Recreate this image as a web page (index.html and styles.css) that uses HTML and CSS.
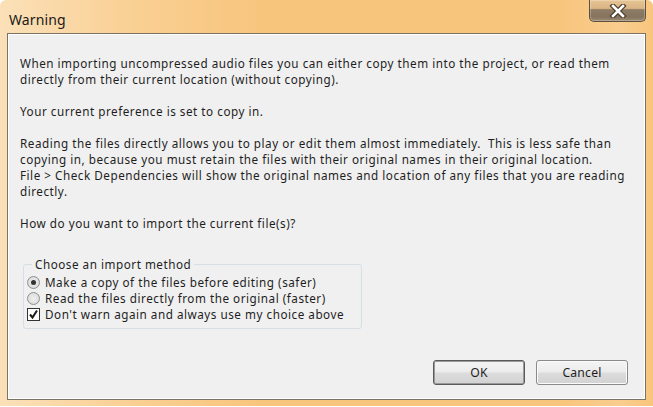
FILE: index.html
```html
<!DOCTYPE html>
<html>
<head>
<meta charset="utf-8">
<link rel="stylesheet" href="styles.css">
</head>
<body>
<div class="window">
  <div class="titlebar">
    <span class="title">Warning</span>
    <div class="close">
      <svg width="20" height="14" viewBox="0 0 20 14">
        <path d="M5 2 L15 12 M15 2 L5 12" stroke="#4a3c2c" stroke-width="5" stroke-linecap="square"/>
        <path d="M5 2 L15 12 M15 2 L5 12" stroke="#ffffff" stroke-width="2.6" stroke-linecap="square"/>
      </svg>
    </div>
  </div>
  <div class="panel">
    <div class="body">
      <p>When importing uncompressed audio files you can either copy them into the project, or read them<br>directly from their current location (without copying).</p>
      <p>Your current preference is set to copy in.</p>
      <p>Reading the files directly allows you to play or edit them almost immediately.&nbsp; This is less safe than<br>copying in, because you must retain the files with their original names in their original location.<br>File &gt; Check Dependencies will show the original names and location of any files that you are reading<br>directly.</p>
      <p class="question">How do you want to import the current file(s)?</p>
      <fieldset class="group">
        <legend>Choose an import method</legend>
        <div class="opt"><span class="radio checked"></span>Make a copy of the files before editing (safer)</div>
        <div class="opt"><span class="radio"></span>Read the files directly from the original (faster)</div>
        <div class="opt"><span class="check"><svg width="11" height="11" viewBox="0 0 11 11"><path d="M2 5.5 L4.5 8.5 L9 1.5" fill="none" stroke="#1a1a1a" stroke-width="2"/></svg></span>Don't warn again and always use my choice above</div>
      </fieldset>
    </div>
    <div class="buttons">
      <button class="btn default">OK</button>
      <button class="btn">Cancel</button>
    </div>
  </div>
</div>
</body>
</html>
```
FILE: styles.css
```css
html, body {
  margin: 0;
  padding: 0;
}
body {
  width: 653px;
  height: 407px;
  overflow: hidden;
  background: #ffffff;
  font-family: "Noto Sans", "Open Sans", sans-serif;
  font-size: 11.7px;
  letter-spacing: 0.52px;
  color: #1e1e1e;
}
.window {
  width: 653px;
  height: 406px;
  box-sizing: border-box;
  background: linear-gradient(90deg, #fbe0b8 0px, #f9cf92 140px, #f8c57d 260px, #f8c57d 560px, #f9cd8e 620px, #f8c57d 653px);
  padding: 0 7px 6px 7px;
  display: flex;
  flex-direction: column;
  border-radius: 6px 6px 0 0;
}
.titlebar {
  height: 33px;
  display: flex;
  align-items: flex-start;
  justify-content: space-between;
  flex-shrink: 0;
}
.title {
  margin-top: 10px;
  margin-left: 2px;
  font-size: 14px;
  letter-spacing: 0.1px;
  color: #1a1a1a;
}
.close {
  width: 57px;
  height: 22px;
  box-sizing: border-box;
  border: 1px solid #5e5040;
  border-top: none;
  border-radius: 0 0 5px 5px;
  background: linear-gradient(180deg, #e7c493 0%, #d9b585 40%, #8e7c66 46%, #85735e 80%, #9c8a72 100%);
  display: flex;
  align-items: center;
  justify-content: center;
  box-shadow: inset 0 0 0 1px rgba(255,255,255,0.25);
}
.panel {
  flex: 1;
  background: #f0f0f0;
  border: 1px solid #7b7266;
  box-shadow: inset 1px 1px 0 #ffffff, inset -1px -1px 0 #ffffff;
  display: flex;
  flex-direction: column;
  justify-content: space-between;
}
.body {
  padding: 21px 12px 0 12px;
}
.body p {
  margin: 0 0 16px 0;
  line-height: 16px;
  white-space: nowrap;
}
.body p.question {
  margin-bottom: 25px;
}
.group {
  margin: 0 0 0 3px;
  width: 339px;
  box-sizing: border-box;
  border: 1px solid #d5dfe5;
  border-radius: 3px;
  padding: 2px 0 6px 3px;
}
.group legend {
  padding: 0 3px;
  margin-left: 5px;
  line-height: 16px;
}
.opt {
  display: flex;
  align-items: center;
  height: 16px;
  line-height: 16px;
  white-space: nowrap;
}
.radio {
  width: 11px;
  height: 11px;
  border: 1px solid #8e8f8f;
  border-radius: 50%;
  background: radial-gradient(circle, #f0f0f0 0%, #e0e0e0 60%, #d0d0d0 100%);
  margin-right: 5px;
  position: relative;
  flex-shrink: 0;
}
.radio.checked::after {
  content: "";
  position: absolute;
  left: 3px;
  top: 3px;
  width: 5px;
  height: 5px;
  border-radius: 50%;
  background: #333333;
}
.check {
  width: 11px;
  height: 11px;
  border: 1px solid #333333;
  background: #ffffff;
  margin-right: 5px;
  display: flex;
  align-items: center;
  justify-content: center;
  flex-shrink: 0;
}
.buttons {
  display: flex;
  justify-content: flex-end;
  gap: 11px;
  padding: 0 17px 14px 0;
}
.btn {
  width: 92px;
  height: 25px;
  font-family: inherit;
  font-size: 12.2px;
  letter-spacing: 0.2px;
  color: #1e1e1e;
  border: 1px solid #8a8a8a;
  border-radius: 3px;
  background: linear-gradient(180deg, #f4f4f4 0%, #ececec 48%, #dcdcdc 52%, #d2d2d2 100%);
  box-shadow: inset 0 0 0 1px #fbfbfb;
  padding: 0;
}
.btn.default {
  border: 1px solid #5a5a5a;
  box-shadow: inset 0 0 0 1px #9a9a9a;
}
```
